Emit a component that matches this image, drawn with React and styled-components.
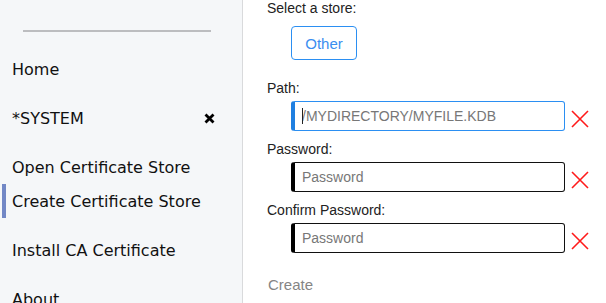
import React from 'react'
import styled, { createGlobalStyle } from 'styled-components'

const GlobalStyle = createGlobalStyle`
  html, body {
    margin: 0;
    padding: 0;
    background: #ffffff;
  }
  * {
    box-sizing: border-box;
  }
`

const Page = styled.div`
  display: flex;
  height: 303px;
  overflow: hidden;
`

const Sidebar = styled.nav`
  width: 243px;
  flex-shrink: 0;
  background: #f5f7f9;
  border-right: 1px solid #d9dadc;
  padding-top: 30px;
  font-family: 'DejaVu Sans', Verdana, sans-serif;
  font-size: 16px;
  color: #111;
`

const Divider = styled.hr`
  margin: 0 31px 0 23px;
  border: 0;
  border-top: 2px solid #bcbdc0;
`

const Menu = styled.ul`
  list-style: none;
  margin: 20px 0 0;
  padding: 0;
  display: flex;
  flex-direction: column;
  gap: 15px;
`

const Group = styled.li`
  display: flex;
  flex-direction: column;
`

const Item = styled.div`
  position: relative;
  height: 34px;
  display: flex;
  align-items: center;
  justify-content: space-between;
  padding: 0 27px 0 12px;
  white-space: nowrap;

  ${(p) =>
    p.$active &&
    `
    &::before {
      content: '';
      position: absolute;
      left: 2px;
      top: 0;
      bottom: 0;
      width: 4px;
      background: #7288c6;
    }
  `}
`

const CloseIcon = () => (
  <svg width="11" height="11" viewBox="0 0 11 11">
    <path d="M1.5 1.5 L9.5 9.5 M9.5 1.5 L1.5 9.5" stroke="#000" strokeWidth="2.8" />
  </svg>
)

const Main = styled.main`
  flex: 1;
  padding: 0 0 0 24px;
  font-family: 'Liberation Sans', Arial, sans-serif;
  font-size: 14px;
  color: #222;
`

const Label = styled.div`
  line-height: 16px;
  height: 16px;
  margin-top: ${(p) => p.$top || 0}px;
`

const StoreButton = styled.button`
  margin: 10px 0 0 24px;
  width: 66px;
  height: 34px;
  border: 1px solid #2b8ff2;
  border-radius: 4px;
  background: #fff;
  color: #3a8ef0;
  font-family: 'Liberation Sans', Arial, sans-serif;
  font-size: 15px;
  padding: 0;
`

const InputRow = styled.div`
  display: flex;
  align-items: center;
  gap: 6px;
  margin: 5px 0 0 24px;
`

const TextInput = styled.input`
  width: 274px;
  height: 30px;
  border: 1px solid ${(p) => (p.$focused ? '#2b8ff2' : '#111')};
  border-left: 4px solid ${(p) => (p.$focused ? '#1f7fe0' : '#000')};
  border-radius: 3px;
  padding: 0 0 0 7px;
  font-family: 'Liberation Sans', Arial, sans-serif;
  font-size: 14px;
  color: #222;
  outline: none;

  &::placeholder {
    color: #777;
  }
`

const Caret = styled.span`
  position: absolute;
  left: 11px;
  top: 7px;
  width: 1px;
  height: 16px;
  background: #222;
`

const InputWrap = styled.div`
  position: relative;
  display: flex;
`

const InvalidMark = styled.svg`
  margin-top: 5px;
  flex-shrink: 0;
`

const RedX = () => (
  <InvalidMark width="18" height="18" viewBox="0 0 18 18">
    <path d="M1 1 L17 17 M17 1 L1 17" stroke="#ff1a1a" strokeWidth="1.6" />
  </InvalidMark>
)

const CreateButton = styled.button`
  margin-top: 22px;
  border: 0;
  background: none;
  padding: 0 1px;
  height: 18px;
  font-family: 'Liberation Sans', Arial, sans-serif;
  font-size: 15px;
  color: #858585;
`

const Field = ({ label, top, placeholder, focused, type }) => (
  <>
    <Label $top={top}>{label}</Label>
    <InputRow>
      <InputWrap>
        <TextInput type={type} placeholder={placeholder} $focused={focused} readOnly />
        {focused && <Caret />}
      </InputWrap>
      <RedX />
    </InputRow>
  </>
)

const App = () => {
  return (
    <>
      <GlobalStyle />
      <Page>
        <Sidebar>
          <Divider />
          <Menu>
            <Group>
              <Item>Home</Item>
            </Group>
            <Group>
              <Item>
                *SYSTEM
                <CloseIcon />
              </Item>
            </Group>
            <Group>
              <Item>Open Certificate Store</Item>
              <Item $active>Create Certificate Store</Item>
            </Group>
            <Group>
              <Item>Install CA Certificate</Item>
            </Group>
            <Group>
              <Item>About</Item>
            </Group>
          </Menu>
        </Sidebar>
        <Main>
          <Label>Select a store:</Label>
          <StoreButton>Other</StoreButton>
          <Field label="Path:" top={20} placeholder="/MYDIRECTORY/MYFILE.KDB" focused type="text" />
          <Field label="Password:" top={10} placeholder="Password" type="password" />
          <Field label="Confirm Password:" top={10} placeholder="Password" type="password" />
          <div>
            <CreateButton disabled>Create</CreateButton>
          </div>
        </Main>
      </Page>
    </>
  )
}

export default App
